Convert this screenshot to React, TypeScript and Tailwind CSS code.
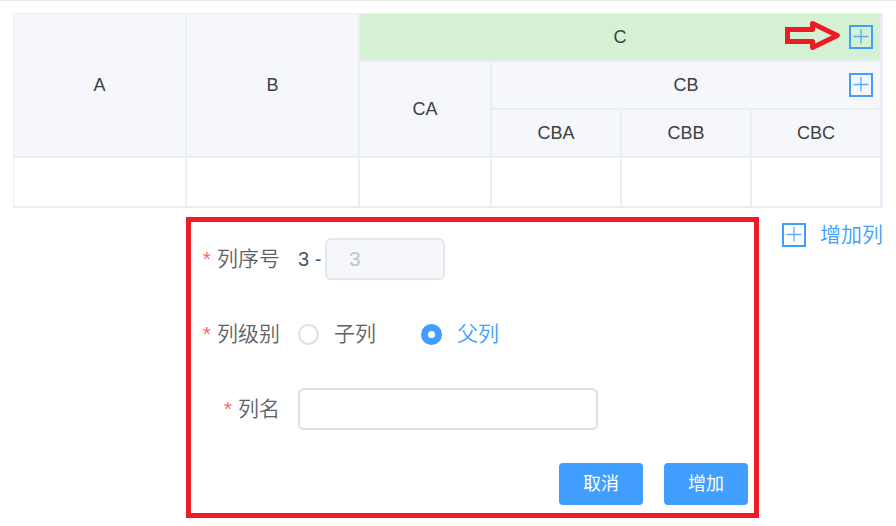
import * as React from "react"

const headClass = "relative h-12 border-r-2 border-b-2 border-[#ebeef5] font-normal"

function PlusBox() {
  return (
    <svg className="block size-6 shrink-0" viewBox="0 0 24 24" fill="none" stroke="#409eff" aria-hidden="true">
      <rect x="1" y="1" width="22" height="22" strokeWidth="2" />
      <path d="M4.5 11.5H19.5M12 4V18.5" strokeWidth="1.3" strokeOpacity="0.85" />
    </svg>
  )
}

function ArrowMark() {
  return (
    <svg className="block h-[34px] w-[55px]" viewBox="0 0 55 34" fill="none" stroke="#ed1c24" strokeWidth="5" aria-hidden="true">
      <path d="M2.5 9.5H27.5V3.6L52.3 15.5L27.5 27.4V21.5H2.5Z" strokeLinejoin="round" />
      <path d="M2.5 21.5V9.5" strokeLinecap="square" />
    </svg>
  )
}

function HeaderTable() {
  return (
    <div className="border-t border-r border-l border-[#ebeef5]">
      <table className="w-full table-fixed border-separate border-spacing-0 text-lg/6 text-[#404040]">
        <colgroup>
          <col />
          <col />
          <col className="w-[132px]" />
          <col className="w-[130px]" />
          <col className="w-[130px]" />
          <col className="w-[130px]" />
        </colgroup>
        <thead className="bg-[#f5f7fa]">
          <tr>
            <th rowSpan={3} className={headClass}>A</th>
            <th rowSpan={3} className={headClass}>B</th>
            <th colSpan={4} className={`${headClass} bg-[#d4f1d4]`}>
              C
              <div className="absolute inset-y-0 right-[7px] flex items-center gap-[9px]">
                <ArrowMark />
                <button type="button" aria-label="C 增加列" className="cursor-pointer">
                  <PlusBox />
                </button>
              </div>
            </th>
          </tr>
          <tr>
            <th rowSpan={2} className={headClass}>CA</th>
            <th colSpan={3} className={headClass}>
              CB
              <div className="absolute inset-y-0 right-[7px] flex items-center">
                <button type="button" aria-label="CB 增加列" className="cursor-pointer">
                  <PlusBox />
                </button>
              </div>
            </th>
          </tr>
          <tr>
            <th className={headClass}>CBA</th>
            <th className={headClass}>CBB</th>
            <th className={headClass}>CBC</th>
          </tr>
        </thead>
        <tbody>
          <tr>
            {["A", "B", "CA", "CBA", "CBB", "CBC"].map((key) => (
              <td key={key} className="h-[50px] border-r-2 border-b-2 border-[#ebeef5]"></td>
            ))}
          </tr>
        </tbody>
      </table>
    </div>
  )
}

function Required() {
  return <span className="mr-[6px] text-[#f56c6c]">*</span>
}

const labelClass = "w-[107px] shrink-0 pr-[18px] text-right font-[350] whitespace-nowrap text-[#606266]"

function LevelRadio({ value, current, onPick, children }: {
  value: string
  current: string
  onPick: (value: string) => void
  children: React.ReactNode
}) {
  return (
    <label className="flex cursor-pointer items-center gap-[15px] font-[350] text-[#606266] has-checked:text-[#409eff]">
      <input
        type="radio"
        name="level"
        value={value}
        checked={current === value}
        onChange={() => onPick(value)}
        className="size-[21px] appearance-none rounded-full border-2 border-[#dcdfe6] bg-white checked:border-[7px] checked:border-[#409eff]"
      />
      {children}
    </label>
  )
}

function ColumnForm() {
  const [level, setLevel] = React.useState("parent")
  const [name, setName] = React.useState("")

  return (
    <form
      onSubmit={(e) => e.preventDefault()}
      className="flex flex-1 flex-col gap-[33px] border-5 border-[#ed1c24] pt-4 pr-[6px] pb-2 text-[21px]/[42px]"
    >
      <div className="flex items-center">
        <label htmlFor="order" className={labelClass}><Required />列序号</label>
        <span className="w-[27px] text-xl/[42px] whitespace-nowrap text-[#48576a]">3 -</span>
        <input
          id="order"
          disabled
          value="3"
          className="h-[42px] w-[120px] rounded-md border-2 border-[#e4e7ed] bg-[#f5f7fa] px-[22px] text-[#c0c4cc]"
        />
      </div>
      <div className="flex items-center" role="radiogroup" aria-labelledby="level-label">
        <span id="level-label" className={labelClass}><Required />列级别</span>
        <div className="flex gap-[45px]">
          <LevelRadio value="child" current={level} onPick={setLevel}>子列</LevelRadio>
          <LevelRadio value="parent" current={level} onPick={setLevel}>父列</LevelRadio>
        </div>
      </div>
      <div className="flex items-center">
        <label htmlFor="name" className={labelClass}><Required />列名</label>
        <input
          id="name"
          value={name}
          onChange={(e) => setName(e.target.value)}
          className="h-[42px] w-[300px] rounded-md border-2 border-[#dcdfe6] bg-white px-[22px] text-[#606266] outline-none focus:border-[#409eff]"
        />
      </div>
      <div className="flex justify-end gap-[21px] text-lg/[42px] text-white">
        <button type="button" className="h-[42px] w-[84px] cursor-pointer rounded bg-[#409eff]">取消</button>
        <button type="submit" className="h-[42px] w-[84px] cursor-pointer rounded bg-[#409eff]">增加</button>
      </div>
    </form>
  )
}

export default function App() {
  return (
    <main className="border-t border-[#e8e8e8] bg-white px-[13px] pt-3 pb-2 font-['Liberation_Sans','Noto_Sans_CJK_SC',sans-serif]">
      <HeaderTable />
      <div className="mt-[9px] ml-[173px] flex items-start gap-[23px]">
        <ColumnForm />
        <button type="button" className="mt-[6px] flex cursor-pointer items-center gap-[14px] text-[21px]/6 font-[350] whitespace-nowrap text-[#409eff]">
          <PlusBox />
          增加列
        </button>
      </div>
    </main>
  )
}
